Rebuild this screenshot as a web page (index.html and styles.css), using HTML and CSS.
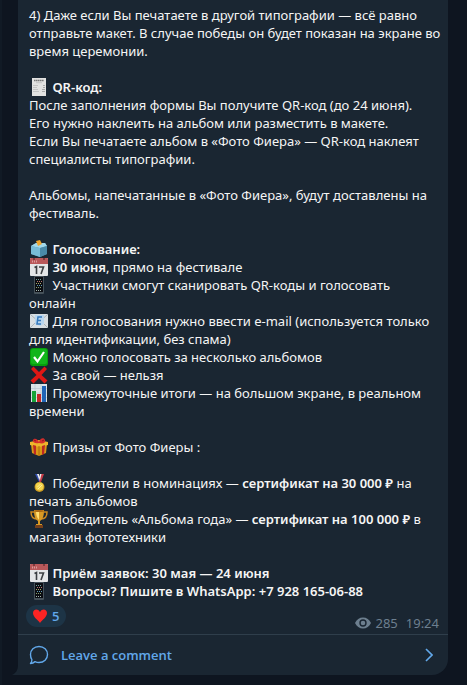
FILE: index.html
```html
<!DOCTYPE html>
<html lang="ru">
  <head>
    <meta charset="UTF-8" />
    <meta name="viewport" content="width=device-width, initial-scale=1.0" />
    <title>Фото Фиера</title>
    <link rel="stylesheet" href="styles.css">
  </head>
  <body>
    <!-- Icons used more than once -->
    <svg class="sprite" aria-hidden="true">
      <symbol id="calendar" viewBox="0 0 18 18">
        <rect width="18" height="18" rx="1" fill="#e4e6e7" />
        <path d="M0 1a1 1 0 0 1 1-1h16a1 1 0 0 1 1 1v5H0z" fill="#b9585a" />
        <path d="M2 3.5h1M4 3.5h1M6 3.5h1" stroke="#dc9c9c" stroke-width="2" />
        <circle cx="4" cy="1" r="1" fill="#6e2f33" />
        <circle cx="14" cy="1" r="1" fill="#6e2f33" />
        <path d="M4.500 9.500 6.500 8.500V16M9 9h4.500L11 16" fill="none" stroke="#3c4043" stroke-width="1.600" />
      </symbol>
      <symbol id="phone" viewBox="0 0 18 18">
        <rect x="4" width="10" height="18" rx="1" fill="#46525a" />
        <rect x="5" y="1" width="8" height="15" fill="#0b0d12" />
        <path d="M6 3.500h1M8 3.500h1M10 3.500h1" stroke="#6f9c96" />
        <path d="M7 5.500h1M9 5.500h1M11 5.500h1" stroke="#b9776f" />
        <path d="M6 7.500h1M8 7.500h1M10 7.500h1" stroke="#a9a76c" />
        <path d="M7 9.500h1M9 9.500h1M11 9.500h1" stroke="#5e9cb7" />
        <path d="M6 11.500h1M8 11.500h1M10 11.500h1" stroke="#8aa06e" />
        <path d="M6 14.500h1M8 14.500h1M10 14.500h1" stroke="#a5b8b2" />
      </symbol>
    </svg>

    <article class="message">
      <div class="message-text">
        <p>4) Даже если Вы печатаете в другой типографии — всё равно отправьте макет. В случае победы он будет показан на экране во время церемонии.</p>

        <p>
          <svg class="emoji" viewBox="0 0 18 18"><path d="M2 0h14v18H2z" fill="#e2e2e1" /><path d="M4 2.500h10" stroke="#777" stroke-width="1.500" stroke-dasharray="1.500 .4" /><path d="M6 4.700h6M3 7.500h5M3 9.500h4M3 11.500h5M3 13.500h6" stroke="#c4c4c4" /><path d="M13 7.500h2M13 9.500h2M12 11.500h3M12 13.500h3" stroke="#aaa" /></svg>
          <b>QR-код:</b><br>
          После заполнения формы Вы получите QR-код (до 24 июня).<br>
          Его нужно наклеить на альбом или разместить в макете.<br>
          Если Вы печатаете альбом в «Фото Фиера» — QR-код наклеят специалисты типографии.
        </p>

        <p>Альбомы, напечатанные в «Фото Фиера», будут доставлены на фестиваль.</p>

        <p>
          <svg class="emoji" viewBox="0 0 18 18"><path d="m1 6 5-3h9l2 3v8l-7 3-9-3z" fill="#5799b6" /><path d="m1 6 5-3h9l2 3-7 2z" fill="#a3d8ea" /><path d="m10 8 7-2v8l-7 3z" fill="#4a8aa9" /><path d="m1 6 9 2v9l-9-3z" fill="#78bbd6" /><path d="m6 1 4-1 2 4-4 2z" fill="#efa52e" /></svg>
          <b>Голосование:</b><br>
          <svg class="emoji"><use href="#calendar" /></svg>
          <b>30 июня</b>, прямо на фестивале<br>
          <svg class="emoji"><use href="#phone" /></svg>
          Участники смогут сканировать QR-коды и голосовать<br>
          онлайн<br>
          <svg class="emoji" viewBox="0 0 18 18"><rect y="2" width="18" height="14" rx="1" fill="#d8dee2" /><path d="m1 15 6-6M17 15l-6-6M1 3l8 7 8-7" fill="none" stroke="#a9b2b8" /><path d="M5 3h9v9l-4 2-5-2z" fill="#b8d6ef" /><path d="M12 5H8L7 12h4M7.500 8.500H11" fill="none" stroke="#3478bc" stroke-width="1.500" /></svg>
          Для голосования нужно ввести e-mail (используется только для идентификации, без спама)<br>
          <svg class="emoji" viewBox="0 0 18 18"><rect width="18" height="18" rx="3" fill="#059d0c" /><rect x="1" y="1" width="16" height="15" rx="2" fill="#12b51b" /><path d="m4 9 3.500 4.500L14 4" fill="none" stroke="#fff" stroke-width="2.200" /></svg>
          Можно голосовать за несколько альбомов<br>
          <svg class="emoji" viewBox="0 0 18 18"><path d="m1 3 2.500-2.500L9 6l5.500-5.500L17 3l-5.500 6 6 5.500-3 3L9 12l-5.500 5.500-3-3L6.500 9z" fill="#df1714" /></svg>
          За свой — нельзя<br>
          <svg class="emoji" viewBox="0 0 18 18"><rect x="1" width="16" height="18" fill="#dce4e8" /><path d="M1 4.500h16M1 9h16M1 13.500h16M5 0v18M11 0v18" stroke="#b6c3ce" stroke-width=".6" /><path d="M2 7h4v11H2z" fill="#17a33a" /><path d="M7 10h4v8H7z" fill="#c62828" /><path d="M12 2h4v16h-4z" fill="#2165b6" /></svg>
          Промежуточные итоги — на большом экране, в реальном времени
        </p>

        <p>
          <svg class="emoji" viewBox="0 0 18 18"><path d="m1 6 8 2 8-2-1 9-7 3-7-3z" fill="#d99717" /><path d="m0 4 9-2 9 2v3L9 9 0 7z" fill="#eeb52b" /><path d="m3 7 3 .8V17l-2-1zM12 8l3-1-1 9-2 1z" fill="#bd2924" /><path d="M9 5C5 6 2 4 3 2s4-2 6 2c1-4 5-5 6-2s-2 4-6 3" fill="#d52d2b" /><path d="M6 3 4 2M12 3l2-1" stroke="#8d191c" /><path d="M9 8v10" stroke="#a96b0f" /></svg>
          Призы от Фото Фиеры :
        </p>

        <p>
          <svg class="emoji" viewBox="0 0 18 18"><path d="M5 0h3l3 8H9z" fill="#304db0" /><path d="M7 0h2l2 6-1 2z" fill="#eee" /><path d="M11 0h3l-3 8H9z" fill="#c63b47" /><path d="M10 0h1.500L10 6z" fill="#eee" /><circle cx="9.500" cy="13" r="5" fill="#c79720" /><circle cx="9.500" cy="12.500" r="4" fill="#f3d34b" /><path d="m7.500 13 3-3M8 15l4-4" stroke="#fff09a" /></svg>
          Победители в номинациях — <b>сертификат на 30 000 ₽</b> на<br>
          печать альбомов<br>
          <svg class="emoji" viewBox="0 0 18 18"><path d="M4 2H1c0 5 2 7 6 7M14 2h3c0 5-2 7-6 7" fill="none" stroke="#c98720" stroke-width="1.500" /><path d="M4 0h10c0 6-1 9-4 11v3h2v2H6v-2h2v-3C5 9 4 6 4 0z" fill="#d99a24" /><path d="M6 1h3v9C7 8 6 5 6 1z" fill="#ffdc6f" /><path d="M5 15h8v3H5z" fill="#75401b" /><ellipse cx="9" cy="1" rx="5" ry="1" fill="#a96816" /></svg>
          Победитель «Альбома года» — <b>сертификат на 100 000 ₽</b> в<br>
          магазин фототехники
        </p>

        <p>
          <svg class="emoji"><use href="#calendar" /></svg>
          <b>Приём заявок: 30 мая — 24 июня</b><br>
          <svg class="emoji"><use href="#phone" /></svg>
          <b>Вопросы? Пишите в WhatsApp: +7 928 165-06-88</b>
        </p>
      </div>

      <div class="message-info">
        <button class="reaction" type="button">
          <svg width="14" height="14" viewBox="0 0 14 14"><path d="M7 14C5 11 0 8 0 4c0-4 5-5 7-1 2-4 7-3 7 1 0 4-5 7-7 10z" fill="#fb2424" /></svg>
          <span>5</span>
        </button>
        <div class="meta">
          <svg width="16" height="12" viewBox="0 0 16 12"><path d="M8 .5C4.500.5 1.500 2.500 0 6c1.500 3.500 4.500 5.500 8 5.500s6.500-2 8-5.500C14.500 2.500 11.500.5 8 .5z" fill="#6d7f8f" /><circle cx="8" cy="6" r="3" fill="none" stroke="#1a2632" stroke-width="1.400" /></svg>
          <span>285</span>
          <time datetime="19:24">19:24</time>
        </div>
      </div>

      <a class="comments" href="#comments">
        <svg width="20" height="20" viewBox="0 0 20 20"><path d="M10 1.500c5 0 8.500 3.500 8.500 8s-3.500 8-8.500 8c-1.500 0-2.700-.3-4-.9-1.200 1-2.700 1.700-4.500 1.900 1-1.200 1.500-2.300 1.400-3.900-1-1.400-1.400-3.200-1.400-5.100 0-4.500 3.500-8 8.500-8z" fill="none" stroke="#62a8ea" stroke-width="1.400" stroke-linejoin="round" /></svg>
        <span>Leave a comment</span>
        <svg class="arrow" width="8" height="14" viewBox="0 0 8 14"><path d="m1 1 6 6-6 6" fill="none" stroke="#62a8ea" stroke-width="1.600" /></svg>
      </a>

      <svg class="tail" width="6" height="10" viewBox="0 0 6 10"><path d="M6 0v10H0c4-2 6-5 6-10z" fill="#1a2632" /></svg>
    </article>
  </body>
</html>
```

FILE: styles.css
```css
body {
  margin: 0;
  padding: 0 19px 10px 16px;
  background-color: #0e1520;
  border-left: 2px solid #111a25;
  color: #f5f5f5;
  font-family: "Noto Sans", "Open Sans", sans-serif;
  font-size: 13px;
  line-height: 18px;
}

.sprite {
  display: none;
}

.message {
  position: relative;
  background-color: #1a2632;
  border-radius: 0 0 16px 0;
}

.message-text {
  padding: 6px 3px 0 11px;
}

p {
  margin: 0 0 18px;
}

p:last-child {
  margin-bottom: 0;
}

b {
  font-weight: 600;
}

.emoji {
  width: 18px;
  height: 18px;
  margin: 0 1px;
  vertical-align: top;
}

.message-info {
  display: flex;
  justify-content: space-between;
  align-items: flex-start;
  padding: 5px 9px 7px 8px;
}

.reaction {
  display: flex;
  align-items: center;
  gap: 5px;
  height: 22px;
  padding: 0 7px;
  border: none;
  border-radius: 11px;
  background-color: #1d3446;
  color: #62a8ea;
  font: 600 13px "Open Sans", sans-serif;
  cursor: pointer;
}

.meta {
  display: flex;
  align-items: center;
  gap: 4px;
  padding-top: 9px;
  margin-bottom: -5px;
  color: #6d7f8f;
}

.meta time {
  margin-left: 4px;
}

.comments {
  display: flex;
  align-items: center;
  gap: 12px;
  height: 40px;
  padding: 0 15px 0 11px;
  border-top: 1px solid #2f3e4b;
  color: #62a8ea;
  font-family: "Open Sans", sans-serif;
  font-weight: 600;
  text-decoration: none;
}

.arrow {
  margin-left: auto;
}

.tail {
  position: absolute;
  right: 100%;
  bottom: 0;
}
```
